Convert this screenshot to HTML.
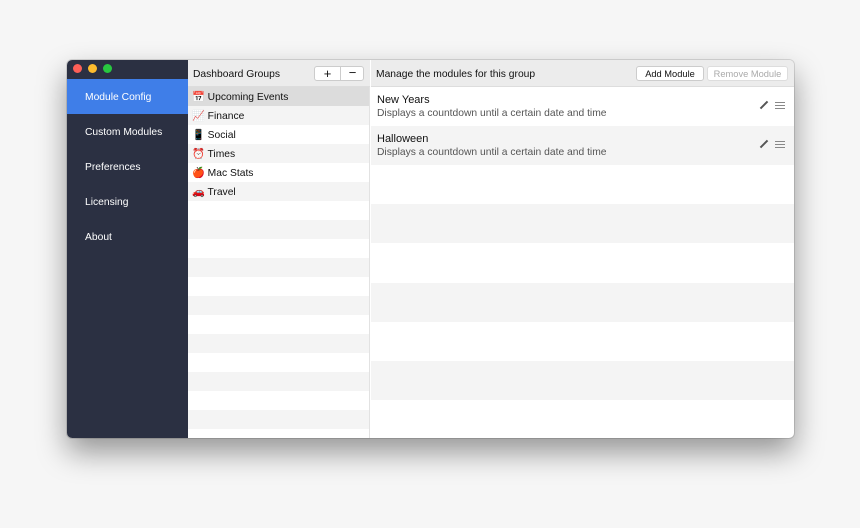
<!DOCTYPE html>
<html><head><style>
*{margin:0;padding:0;box-sizing:border-box}
body{width:860px;height:528px;background:#f6f6f6;font-family:"Liberation Sans","Noto Sans CJK JP",sans-serif;position:relative;overflow:hidden}
.win{position:absolute;left:67px;top:60px;width:727px;height:378px;background:#fff;border-radius:5px;overflow:hidden;box-shadow:0 14px 30px rgba(0,0,0,.4),0 0 0 1px rgba(0,0,0,.12)}
.side{position:absolute;left:0;top:0;width:121px;height:378px;background:#2b3042}
.dot{position:absolute;top:4px;width:9px;height:9px;border-radius:50%}
.si{position:absolute;left:0;width:121px;height:35px;color:#fff;font-size:10.3px;line-height:37px;padding-left:18px}
.mid{position:absolute;left:121px;top:0;width:182px;height:378px;border-right:1px solid #e2e2e2}
.hdr{position:absolute;top:0;height:27px;background:#ececec;border-bottom:1px solid #ddd;font-size:10.3px;line-height:29px;color:#111}
.row{position:absolute;left:0;width:100%;height:19px;font-size:10.3px;line-height:21px;padding-left:4px;color:#111}
.g{background:#f4f4f4}
.btn{position:absolute;top:6px;height:15px;background:#fff;border:1px solid #ccc;border-radius:3px;font-size:9.3px;line-height:14px;text-align:center}
.rr{position:absolute;left:0;width:100%;height:39px}
.t{position:absolute;left:6px;top:7px;font-size:11px;color:#111}
.d{position:absolute;left:6px;top:21px;font-size:10.3px;color:#555}
.ham{position:absolute;right:9px;top:15px;width:10px;height:7px;border-top:1px solid #888;border-bottom:1px solid #888}
.ham:after{content:"";position:absolute;left:0;right:0;top:2px;border-top:1px solid #888}
.pen{position:absolute;right:29px;top:13px;width:2px;height:10px;background:#555;transform:rotate(45deg)}
</style></head><body>
<div class="win">
 <div class="side">
  <div class="dot" style="left:6px;background:#fc5f57"></div>
  <div class="dot" style="left:21px;background:#fdbc2e"></div>
  <div class="dot" style="left:36px;background:#28c840"></div>
  <div class="si" style="top:19px;background:#3f7ee8">Module Config</div>
  <div class="si" style="top:54px">Custom Modules</div>
  <div class="si" style="top:89px">Preferences</div>
  <div class="si" style="top:124px">Licensing</div>
  <div class="si" style="top:159px">About</div>
 </div>
 <div class="mid">
  <div class="hdr" style="left:0;width:182px;padding-left:5px">Dashboard Groups
   <div class="btn" style="left:126px;width:50px;top:6px"><span style="position:absolute;left:0;width:25px;font-size:13px">+</span><span style="position:absolute;left:25px;top:-1px;width:24px;border-left:1px solid #ccc;font-size:13px;height:15px">−</span></div>
  </div>
  <div class="row" style="top:27px;background:#dcdcdc">📅 Upcoming Events</div>
  <div class="row g" style="top:46px">📈 Finance</div>
  <div class="row" style="top:65px">📱 Social</div>
  <div class="row g" style="top:84px">⏰ Times</div>
  <div class="row" style="top:103px">🍎 Mac Stats</div>
  <div class="row g" style="top:122px">🚗 Travel</div>
  <div class="row g" style="top:160px"></div>
  <div class="row g" style="top:198px"></div>
  <div class="row g" style="top:236px"></div>
  <div class="row g" style="top:274px"></div>
  <div class="row g" style="top:312px"></div>
  <div class="row g" style="top:350px"></div>
 </div>
 <div style="position:absolute;left:304px;top:0;width:423px;height:378px">
  <div class="hdr" style="left:0;width:423px;padding-left:5px">Manage the modules for this group
   <div class="btn" style="left:265px;width:68px">Add Module</div>
   <div class="btn" style="left:336px;width:81px;color:#aaa;border-color:#ddd">Remove Module</div>
  </div>
  <div class="rr" style="top:27px"><div class="t">New Years</div><div class="d">Displays a countdown until a certain date and time</div><div class="pen"></div><div class="ham"></div></div>
  <div class="rr g" style="top:66px"><div class="t">Halloween</div><div class="d">Displays a countdown until a certain date and time</div><div class="pen"></div><div class="ham"></div></div>
  <div class="rr g" style="top:144px"></div>
  <div class="rr g" style="top:223px"></div>
  <div class="rr g" style="top:301px"></div>
 </div>
</div>
</body></html>
